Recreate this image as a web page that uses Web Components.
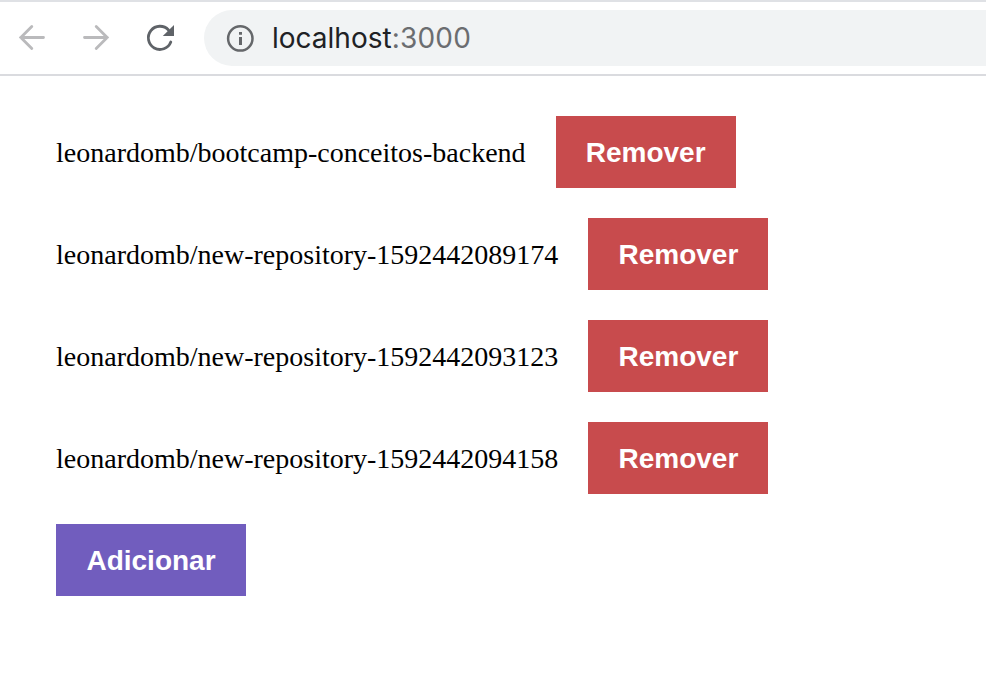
<!DOCTYPE html>
<html lang="pt-BR"><head><meta charset="utf-8"><title>localhost:3000</title>
<style>html,body{margin:0;background:#fff}body{height:696px;overflow:hidden}</style></head>
<body>
<browser-bar><span slot="host">localhost</span><span slot="port">:3000</span></browser-bar>
<repo-list>
<repo-item>leonardomb/bootcamp-conceitos-backend</repo-item>
<repo-item>leonardomb/new-repository-1592442089174</repo-item>
<repo-item>leonardomb/new-repository-1592442093123</repo-item>
<repo-item>leonardomb/new-repository-1592442094158</repo-item>
</repo-list>
<script>
const define=(name,html)=>customElements.define(name,class extends HTMLElement{
constructor(){super();this.attachShadow({mode:'open'}).innerHTML=html}
});
define('nav-icons',`<style>:host{display:flex;gap:32px;padding-left:16px}svg{display:block;width:32px;height:32px;fill:none;stroke:#bababc;stroke-width:2.8;stroke-linecap:round}.r{stroke:#5f6368}</style>
<svg viewBox="0 0 32 32"><path d="M27.500 15.500H4.800M15.800 4.400 4.800 15.500 15.800 26.600"/></svg>
<svg viewBox="0 0 32 32"><path d="M4.500 15.500h22.700M16.200 4.400 27.200 15.500 16.200 26.600"/></svg>
<svg class="r" viewBox="0 0 32 32"><path d="M26.800 20A11.600 11.600 0 1 1 24.500 8"/><path d="M30 3v11H18.800z" fill="#5f6368" stroke="none"/></svg>`);
define('browser-bar',`<style>:host{display:flex;align-items:center;box-sizing:border-box;height:76px;border-top:2px solid #dfe1e5;border-bottom:2px solid #dadbdf;background:#fff}
.address{display:flex;align-items:center;flex:1;height:56px;margin-left:28px;padding-left:22px;background:#f1f3f4;border-radius:28px 0 0 28px;font:28px/36px Inter,sans-serif;font-feature-settings:"calt" 0;color:#202124}
svg{width:28px;height:28px;margin-right:18px}::slotted([slot=port]){color:#6b6d70;letter-spacing:.2px}</style>
<nav-icons></nav-icons><div class="address"><svg viewBox="0 0 28 28"><circle cx="14.300" cy="14.400" r="12.200" fill="none" stroke="#65676a" stroke-width="2.500"/><path d="M13 13h3v8h-3zM13 8h3v2.800h-3z" fill="#65676a"/></svg><slot name="host"></slot><slot name="port"></slot></div>`);
define('action-button',`<style>:host{display:block}button{display:block;box-sizing:border-box;height:72px;width:var(--w,180px);margin:0;padding:2px 0 0;border:0;background:var(--bg);color:#fff;font:bold 28px "Liberation Sans",sans-serif}</style><button><slot></slot></button>`);
define('repo-item',`<style>:host{display:flex;align-items:center;gap:30px;height:72px;font:28px/32px "Liberation Serif",serif;color:#000;white-space:nowrap}span{padding-top:2px}action-button{--bg:#c84b4d}</style><span><slot></slot></span><action-button>Remover</action-button>`);
define('repo-list',`<style>:host{display:flex;flex-direction:column;align-items:flex-start;gap:30px;padding:40px 56px}action-button{--bg:#715dbe;--w:190px}</style><slot></slot><action-button>Adicionar</action-button>`);
</script></body></html>
